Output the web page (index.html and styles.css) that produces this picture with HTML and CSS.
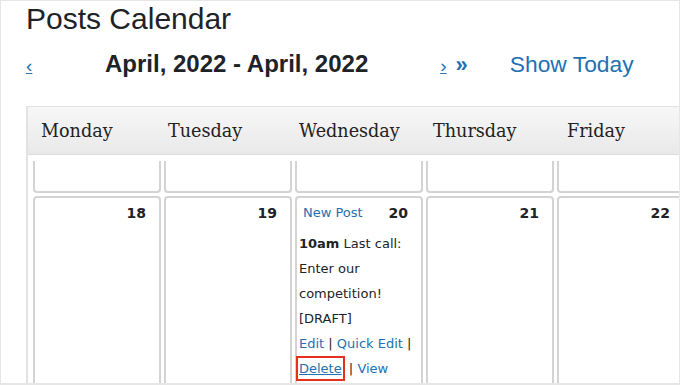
FILE: index.html
```html
<!DOCTYPE html>
<html>
<head>
<meta charset="utf-8">
<link rel="stylesheet" href="styles.css">
</head>
<body>
<div class="frame">
  <h1 class="title">Posts Calendar</h1>
  <div class="nav">
    <a class="prev" href="#">‹</a>
    <span class="range">April, 2022 - April, 2022</span>
    <span class="next-group"><a class="next" href="#">›</a><span class="fast">»</span></span>
    <a class="today" href="#">Show Today</a>
  </div>
  <div class="calendar">
    <div class="cal-head">
      <div class="day-name">Monday</div>
      <div class="day-name">Tuesday</div>
      <div class="day-name">Wednesday</div>
      <div class="day-name">Thursday</div>
      <div class="day-name">Friday</div>
    </div>
    <div class="cal-body">
      <div class="cell tail"></div>
      <div class="cell tail"></div>
      <div class="cell tail"></div>
      <div class="cell tail"></div>
      <div class="cell tail"></div>

      <div class="cell day"><div class="cell-top"><span></span><span class="num">18</span></div></div>
      <div class="cell day"><div class="cell-top"><span></span><span class="num">19</span></div></div>
      <div class="cell day">
        <div class="cell-top"><a class="new-post" href="#">New Post</a><span class="num">20</span></div>
        <div class="post">
          <div><b>10am</b> Last call:</div>
          <div>Enter our</div>
          <div>competition!</div>
          <div>[DRAFT]</div>
          <div><a href="#">Edit</a> | <a href="#">Quick Edit</a> |</div>
          <div><a class="delete" href="#">Delete</a> | <a href="#">View</a></div>
        </div>
      </div>
      <div class="cell day"><div class="cell-top"><span></span><span class="num">21</span></div></div>
      <div class="cell day"><div class="cell-top"><span></span><span class="num">22</span></div></div>
    </div>
  </div>
</div>
</body>
</html>
```

FILE: styles.css
```css
html, body {
  margin: 0;
  padding: 0;
  background: #fff;
}

.frame {
  box-sizing: border-box;
  width: 680px;
  height: 385px;
  border: 1px solid #e6e6e6;
  border-bottom-width: 2px;
  overflow: hidden;
  font-family: "Liberation Sans", Arial, sans-serif;
  color: #1d2327;
}

.title {
  margin: 0;
  padding: 0 0 0 25px;
  height: 40px;
  font-size: 30px;
  font-weight: 400;
  line-height: 36px;
  color: #1d2327;
}

.nav {
  display: flex;
  align-items: baseline;
  padding-left: 25px;
  height: 65px;
  line-height: 46px;
  font-size: 23px;
}

.nav a {
  color: #2271b1;
}

.prev {
  width: 7px;
  font-size: 19px;
}

.range {
  margin-left: 72px;
  font-weight: 700;
  font-size: 24px;
  color: #1d2327;
}

.next-group {
  margin-left: 72px;
  display: flex;
  align-items: baseline;
}

.next {
  font-size: 19px;
}

.fast {
  margin-left: 9px;
  color: #2271b1;
  font-weight: 700;
  font-size: 22px;
}

.nav .today {
  margin-left: 42px;
  text-decoration: none;
  font-size: 22.8px;
}

.calendar {
  margin-left: 25px;
  width: 700px;
  border-left: 2px solid #e2e2e2;
  border-top: 1px solid #e2e2e2;
}

.cal-head {
  display: grid;
  grid-template-columns: 127px 131px 134px 134px 134px;
  padding-left: 13px;
  height: 47px;
  align-items: center;
  background: linear-gradient(#f7f7f7, #e9e9e9);
  border-bottom: 1px solid #dcdcdc;
  font-family: "DejaVu Serif", Georgia, serif;
  font-size: 17.6px;
  color: #222;
}

.day-name {
  padding-top: 1px;
}

.cal-body {
  display: grid;
  grid-template-columns: repeat(5, 128px);
  column-gap: 3px;
  row-gap: 3px;
  padding-left: 5px;
  padding-top: 6px;
}

.cell {
  box-sizing: border-box;
  border: 2px solid #d3d3d3;
  border-radius: 4px;
  background: #fff;
  font-family: "DejaVu Sans", Verdana, sans-serif;
  font-size: 13px;
  color: #1d2327;
}

.cell.tail {
  height: 32px;
  border-top: none;
  border-top-left-radius: 0;
  border-top-right-radius: 0;
}

.cell.day {
  height: 200px;
  padding: 2px 13px 0 2px;
}

.cell-top {
  display: flex;
  justify-content: space-between;
  align-items: baseline;
  line-height: 25px;
}

.num {
  font-weight: 700;
  font-size: 14px;
  position: relative;
  top: 1px;
}

.new-post {
  margin-left: 4px;
  color: #2271b1;
  text-decoration: none;
}

.post {
  margin-top: 6px;
  line-height: 25px;
  white-space: nowrap;
}

.post a {
  color: #2271b1;
  text-decoration: none;
}

.post .delete {
  display: inline-block;
  line-height: 19px;
  margin-left: -3px;
  padding: 1px;
  border: 2px solid #e5301b;
  text-decoration: underline;
}
```
